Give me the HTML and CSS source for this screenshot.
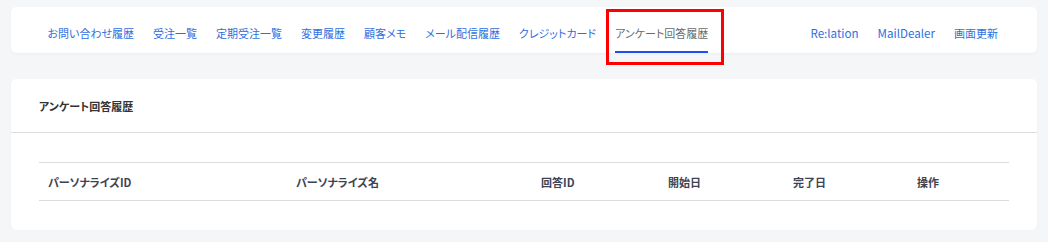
FILE: index.html
```html
<!DOCTYPE html>
<html lang="ja">
<head>
<meta charset="utf-8">
<link rel="stylesheet" href="styles.css">
</head>
<body>
<div class="page">
  <nav class="tabs">
    <div class="tabs-left">
      <a class="tab">お問い合わせ履歴</a>
      <a class="tab">受注一覧</a>
      <a class="tab">定期受注一覧</a>
      <a class="tab">変更履歴</a>
      <a class="tab">顧客メモ</a>
      <a class="tab">メール配信履歴</a>
      <a class="tab">クレジットカード</a>
      <a class="tab active">アンケート回答履歴</a>
    </div>
    <div class="tabs-right">
      <a class="tab latin">Re:lation</a>
      <a class="tab latin">MailDealer</a>
      <a class="tab">画面更新</a>
    </div>
  </nav>
  <section class="card">
    <header class="card-header">アンケート回答履歴</header>
    <div class="card-body">
      <table class="table">
        <thead>
          <tr>
            <th class="c1">パーソナライズID</th>
            <th class="c2">パーソナライズ名</th>
            <th class="c3">回答ID</th>
            <th class="c4">開始日</th>
            <th class="c5">完了日</th>
            <th class="c6">操作</th>
          </tr>
        </thead>
      </table>
    </div>
  </section>
  <div class="highlight"></div>
</div>
</body>
</html>
```
FILE: styles.css
```css
* { box-sizing: border-box; }
html, body { margin: 0; padding: 0; }
body {
  background: #f4f6f8;
  font-family: "Noto Sans CJK JP", "Noto Sans", sans-serif;
  font-size: 11px;
  color: #333;
  font-feature-settings: "palt";
}
.page {
  position: relative;
  padding: 7px 11px 0 11px;
}
.tabs {
  height: 46px;
  background: #fff;
  border-radius: 5px;
  box-shadow: 0 1px 3px rgba(0,0,0,0.04);
  display: flex;
  justify-content: space-between;
  align-items: stretch;
  padding: 0 29.5px 0 27px;
}
.tabs-left, .tabs-right {
  display: flex;
  align-items: stretch;
}
.tab {
  position: relative;
  display: flex;
  align-items: center;
  padding: 5px 9.5px 0;
  color: #2e6fe0;
  text-decoration: none;
  white-space: nowrap;
  cursor: pointer;
}
.tab.latin {
  font-size: 11.6px;
}
.tab.active {
  color: #6b6b6b;
}
.tab.active::after {
  content: "";
  position: absolute;
  left: 9.5px;
  right: 9.5px;
  bottom: 0;
  height: 2px;
  background: #1f4ef5;
}
.card {
  margin-top: 26px;
  background: #fff;
  border-radius: 5px;
  box-shadow: 0 1px 3px rgba(0,0,0,0.04);
}
.card-header {
  height: 54px;
  display: flex;
  align-items: center;
  padding: 1px 28px 0;
  border-bottom: 1px solid #dedede;
  font-weight: bold;
  color: #333;
}
.card-body {
  padding: 29px 28px 29px;
}
.table {
  width: 100%;
  border-collapse: collapse;
  table-layout: fixed;
}
.table th {
  height: 38px;
  padding: 0 9px;
  text-align: left;
  font-weight: bold;
  color: #3e4353;
  border-top: 1px solid #dcdcdc;
  border-bottom: 1px solid #dcdcdc;
}
.c1 { width: 248px; }
.c2 { width: 245px; }
.c3 { width: 127px; }
.c4 { width: 125px; }
.c5 { width: 124px; }
.highlight {
  position: absolute;
  left: 606px;
  top: 9px;
  width: 118px;
  height: 56px;
  border: 3px solid #ff0000;
  pointer-events: none;
}
```
